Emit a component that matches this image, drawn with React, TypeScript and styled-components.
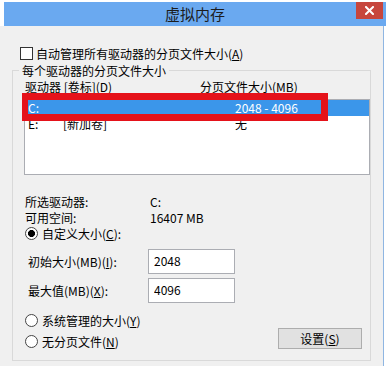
import { FC } from 'react';
import styled, { createGlobalStyle } from 'styled-components';

const GlobalStyle = createGlobalStyle`
    html, body {
        margin: 0;
        padding: 0;
        background: #ffffff;
    }
    body {
        font-family: "Noto Sans CJK SC", "Noto Sans", sans-serif;
        font-size: 12px;
        color: #000;
    }
`

const drives = [
    { letter: 'C:', label: '', size: '2048 - 4096', selected: true },
    { letter: 'E:', label: '[新加卷]', size: '无', selected: false },
]

const CloseIcon: FC = () => (
    <svg width="9" height="9" viewBox="0 0 9 9">
        <path d="M1 1 L8 8 M8 1 L1 8" stroke="#fff" strokeWidth="2" strokeLinecap="square" />
    </svg>
)

export default function App() {
    return (
        <>
            <GlobalStyle />
            <SWindow>
                <STitleBar>
                    <span />
                    <STitle>虚拟内存</STitle>
                    <SClose><CloseIcon /></SClose>
                </STitleBar>
                <SBody>
                    <SCheckRow>
                        <SCheckBox />
                        <span>自动管理所有驱动器的分页文件大小(<u>A</u>)</span>
                    </SCheckRow>
                    <SGroup>
                        <SLegend>每个驱动器的分页文件大小</SLegend>
                        <SInner>
                            <SHeader>
                                <span>驱动器 [卷标](D)</span>
                                <span>分页文件大小(MB)</span>
                            </SHeader>
                            <SListWrap>
                                <SList>
                                    {drives.map((d) => (
                                        <SRow key={d.letter} $selected={d.selected}>
                                            <span>{d.letter}</span>
                                            <span>{d.label}</span>
                                            <span>{d.size}</span>
                                        </SRow>
                                    ))}
                                </SList>
                                <SMark />
                            </SListWrap>
                            <SInfo>
                                <span>所选驱动器:</span>
                                <span>C:</span>
                                <span>可用空间:</span>
                                <span>16407 MB</span>
                            </SInfo>
                            <SRadioRow>
                                <SRadio $checked />
                                <span>自定义大小(<u>C</u>):</span>
                            </SRadioRow>
                            <SFields>
                                <SFieldRow>
                                    <span>初始大小(MB)(<u>I</u>):</span>
                                    <SInput defaultValue="2048" />
                                </SFieldRow>
                                <SFieldRow>
                                    <span>最大值(MB)(<u>X</u>):</span>
                                    <SInput defaultValue="4096" />
                                </SFieldRow>
                            </SFields>
                            <SBottom>
                                <SRadioList>
                                    <SRadioRow>
                                        <SRadio />
                                        <span>系统管理的大小(<u>Y</u>)</span>
                                    </SRadioRow>
                                    <SRadioRow>
                                        <SRadio />
                                        <span>无分页文件(<u>N</u>)</span>
                                    </SRadioRow>
                                </SRadioList>
                                <SButton>设置(<u>S</u>)</SButton>
                            </SBottom>
                        </SInner>
                    </SGroup>
                </SBody>
            </SWindow>
        </>
    )
}

const SWindow = styled.div`
    width: 386px;
    display: flex;
    flex-direction: column;
    padding-top: 2px;
`
const STitleBar = styled.div`
    height: 24px;
    margin-left: 4px;
    background: #6aa9f0;
    display: grid;
    grid-template-columns: 1fr auto 1fr;
    align-items: start;
`
const STitle = styled.div`
    height: 24px;
    line-height: 24px;
    font-size: 15px;
    color: #1c1c1c;
`
const SClose = styled.div`
    justify-self: end;
    width: 27px;
    height: 17px;
    margin-right: 3px;
    background: #c7463d;
    display: flex;
    align-items: center;
    justify-content: center;
`
const SBody = styled.div`
    width: 384px;
    height: 340px;
    box-sizing: border-box;
    background: #f0f0f0;
    border-right: 1px solid #8fb6e2;
    padding-top: 19px;
`
const SCheckRow = styled.div`
    height: 16px;
    margin-left: 20px;
    display: flex;
    align-items: center;
    gap: 3px;
`
const SCheckBox = styled.span`
    width: 11px;
    height: 11px;
    border: 1px solid #333;
    background: #fff;
`
const SGroup = styled.fieldset`
    margin: 1.5px 12px 0 12px;
    padding: 0;
    min-width: 0;
    border: 1px solid #d9d9d9;
`
const SLegend = styled.legend`
    margin-left: 6px;
    padding: 0 3px;
    line-height: 16px;
`
const SInner = styled.div`
    padding: 0 0 11px 11px;
`
const SHeader = styled.div`
    height: 16px;
    line-height: 16px;
    padding-left: 1px;
    display: grid;
    grid-template-columns: 175px 1fr;
`
const SListWrap = styled.div`
    position: relative;
    margin-top: 4.5px;
`
const SList = styled.div`
    height: 76px;
    box-sizing: border-box;
    border: 1px solid #abadb3;
    background: #fff;
`
const SRow = styled.div<{ $selected?: boolean }>`
    height: 16px;
    line-height: 16px;
    padding-left: 3px;
    display: grid;
    grid-template-columns: 35px 172px 1fr;
    background: ${(p) => (p.$selected ? '#3b96ea' : 'transparent')};
    color: ${(p) => (p.$selected ? '#fff' : '#000')};
`
const SMark = styled.div`
    position: absolute;
    left: -2px;
    top: -6.5px;
    width: 306px;
    height: 28px;
    box-sizing: border-box;
    border: 7px solid #e5121a;
    border-left-width: 6px;
`
const SInfo = styled.div`
    margin-top: 18.5px;
    padding-left: 1px;
    display: grid;
    grid-template-columns: 125px 1fr;
    grid-auto-rows: 16px;
    line-height: 16px;
`
const SRadioRow = styled.div`
    height: 16px;
    padding-left: 1px;
    display: flex;
    align-items: center;
    gap: 4px;
`
const SRadio = styled.span<{ $checked?: boolean }>`
    width: 11px;
    height: 11px;
    border: 1px solid #444;
    border-radius: 50%;
    background: ${(p) => (p.$checked ? 'radial-gradient(circle, #000 0 3.2px, #fff 3.8px)' : '#fff')};
`
const SFields = styled.div`
    margin-top: 7.5px;
    display: flex;
    flex-direction: column;
    gap: 4px;
`
const SFieldRow = styled.div`
    height: 25px;
    padding-left: 4px;
    display: grid;
    grid-template-columns: 120px 87px;
    align-items: center;
`
const SInput = styled.input`
    width: 87px;
    height: 25px;
    box-sizing: border-box;
    margin: 0;
    padding: 0 0 3px 5px;
    border: 1px solid #abadb3;
    background: #fff;
    font: inherit;
    color: #000;
    outline: none;
`
const SBottom = styled.div`
    margin-top: 9px;
    margin-right: 8px;
    display: flex;
    align-items: flex-end;
    justify-content: space-between;
`
const SRadioList = styled.div`
    display: flex;
    flex-direction: column;
    gap: 5px;
`
const SButton = styled.button`
    width: 84px;
    height: 21px;
    margin: 0;
    padding: 0;
    border: 1px solid #adadad;
    background: #e1e1e1;
    font: inherit;
    color: #000;
`
